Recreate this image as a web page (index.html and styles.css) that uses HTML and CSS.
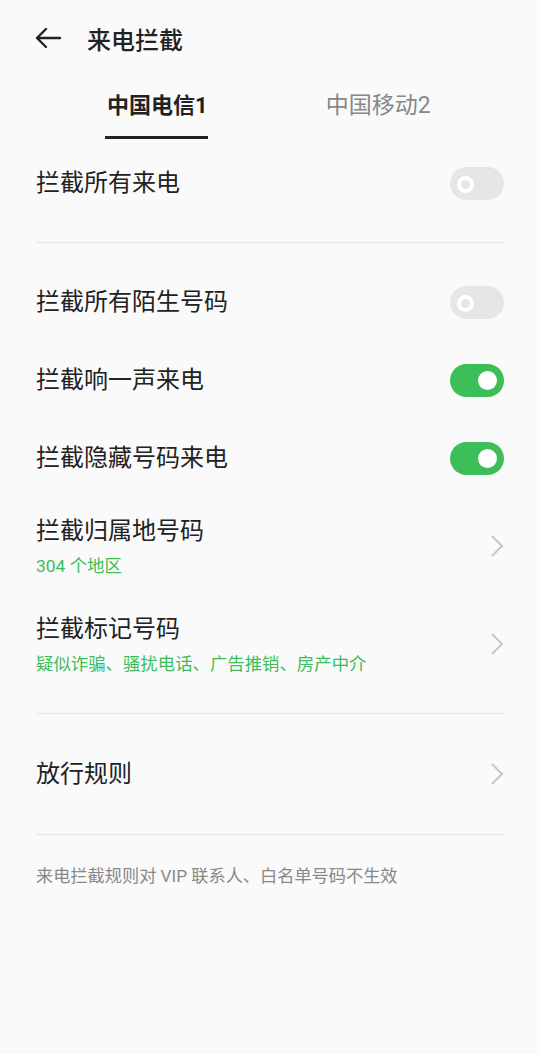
FILE: index.html
```html
<!DOCTYPE html>
<html lang="zh-CN">
<head>
    <meta charset="UTF-8">
    <meta name="viewport" content="width=device-width, initial-scale=1.0">
    <title>来电拦截</title>
    <link rel="stylesheet" href="styles.css">
</head>
<body>
    <div class="page">
        <header class="topbar">
            <svg class="back" width="28" height="24" viewBox="0 0 28 24">
                <path d="M26 12H3M12 3L3 12l9 9" fill="none" stroke="#222" stroke-width="2.4" stroke-linecap="round" stroke-linejoin="round"/>
            </svg>
            <h1>来电拦截</h1>
        </header>

        <nav class="tabs">
            <div class="tab active">中国电信1</div>
            <div class="tab">中国移动2</div>
        </nav>

        <div class="row">
            <span class="label">拦截所有来电</span>
            <span class="switch"></span>
        </div>

        <div class="divider"></div>

        <div class="row">
            <span class="label">拦截所有陌生号码</span>
            <span class="switch"></span>
        </div>
        <div class="row">
            <span class="label">拦截响一声来电</span>
            <span class="switch on"></span>
        </div>
        <div class="row">
            <span class="label">拦截隐藏号码来电</span>
            <span class="switch on"></span>
        </div>
        <div class="row tall">
            <div>
                <div class="label">拦截归属地号码</div>
                <div class="sub">304 个地区</div>
            </div>
            <svg class="chevron" width="14" height="24" viewBox="0 0 14 24"><polyline points="2,2 12,12 2,22" fill="none" stroke="#c6c6c6" stroke-width="2"/></svg>
        </div>
        <div class="row tall">
            <div>
                <div class="label">拦截标记号码</div>
                <div class="sub">疑似诈骗、骚扰电话、广告推销、房产中介</div>
            </div>
            <svg class="chevron" width="14" height="24" viewBox="0 0 14 24"><polyline points="2,2 12,12 2,22" fill="none" stroke="#c6c6c6" stroke-width="2"/></svg>
        </div>

        <div class="divider"></div>

        <div class="row last">
            <span class="label">放行规则</span>
            <svg class="chevron" width="14" height="24" viewBox="0 0 14 24"><polyline points="2,2 12,12 2,22" fill="none" stroke="#c6c6c6" stroke-width="2"/></svg>
        </div>

        <div class="divider"></div>

        <p class="note">来电拦截规则对 VIP 联系人、白名单号码不生效</p>
    </div>
</body>
</html>
```

FILE: styles.css
```css
body {
    margin: 0;
    background-color: #fafafa;
    color: #222;
    font-family: 'Roboto', 'Noto Sans CJK SC', sans-serif;
}
.page {
    padding: 0 36px;
}
.topbar {
    display: flex;
    align-items: center;
    height: 76px;
}
.back {
    margin-left: -2px;
    margin-right: 25px;
}
.topbar h1 {
    margin: 0;
    font-size: 24px;
    font-weight: 500;
}
.tabs {
    display: flex;
    gap: 118px;
    height: 68px;
    padding-left: 69px;
}
.tab {
    font-size: 23px;
    color: #888;
    padding-top: 16px;
    height: 51px;
    box-sizing: border-box;
    line-height: 28px;
}
.tab.active {
    font-size: 22px;
    color: #222;
    font-weight: 700;
    border-bottom: 3px solid #222;
    padding: 16px 0 0 2px;
    height: 63px;
}
.row {
    display: flex;
    align-items: center;
    justify-content: space-between;
    height: 78px;
}
.row.tall {
    height: 98px;
}
.row.last {
    height: 80px;
}
.label {
    font-size: 24px;
    line-height: 32px;
}
.sub {
    font-size: 17.4px;
    line-height: 22px;
    margin-top: 8px;
    color: #3dbd5a;
}
.divider {
    height: 1px;
    background: #e6e6e6;
    margin: 20px 0;
}
.switch {
    position: relative;
    width: 54px;
    height: 33px;
    border-radius: 17px;
    background: #e6e6e6;
}
.switch::after {
    content: "";
    position: absolute;
    left: 7px;
    top: 9px;
    width: 9px;
    height: 9px;
    border: 4px solid #fff;
    border-radius: 50%;
    background: #e6e6e6;
}
.switch.on {
    background: #3dbe58;
}
.switch.on::after {
    left: 28px;
    top: 7px;
    width: 19px;
    height: 19px;
    border: 0;
    background: #fff;
}
.note {
    margin: 27px 0 0;
    font-size: 17.2px;
    color: #888;
}
```
